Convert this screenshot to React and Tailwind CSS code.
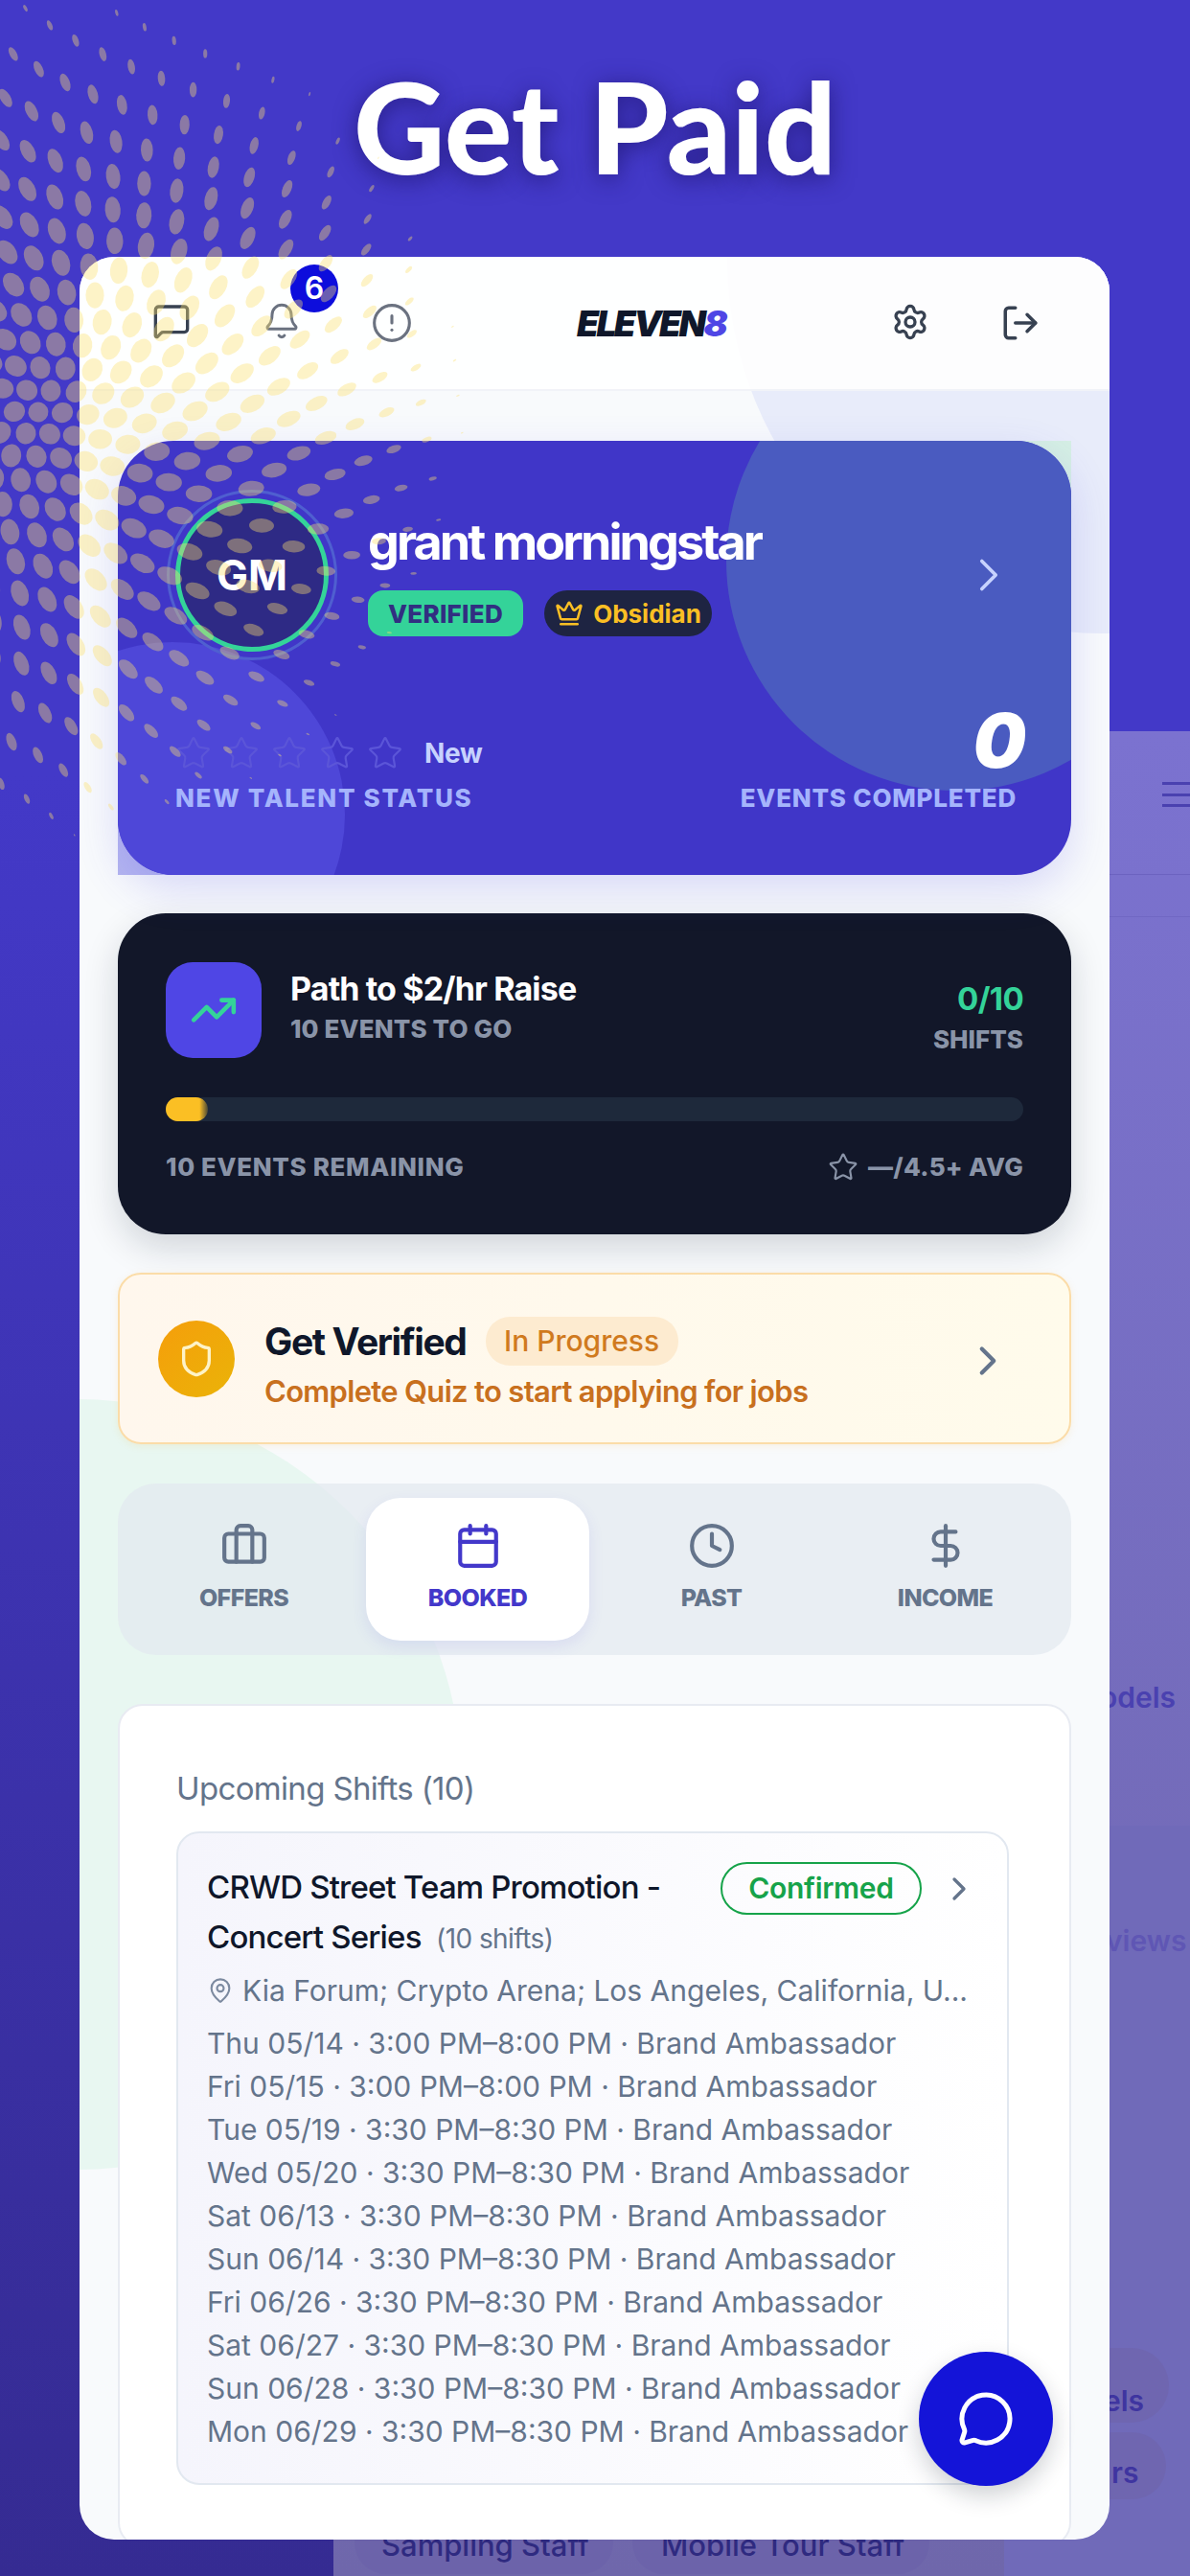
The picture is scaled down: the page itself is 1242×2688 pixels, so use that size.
import React from "react";
import {
  MessageSquare,
  Bell,
  CircleAlert,
  Settings,
  LogOut,
  ChevronRight,
  Star,
  Crown,
  TrendingUp,
  Shield,
  Briefcase,
  Calendar,
  Clock,
  DollarSign,
  MapPin,
  MessageCircle,
} from "lucide-react";

// halftone swirl that sits over the top left of the page
const buildDots = () => {
  const dots = [];
  const cx = 40;
  const cy = 430;
  const step = 24;
  for (let j = -22; j <= 22; j++) {
    for (let i = -22; i <= 22; i++) {
      const u = (i + (j % 2 ? 0.5 : 0)) * step;
      const v = j * step * 0.9;
      const rho = Math.hypot(u, v);
      const r = rho + (rho * rho) / 600;
      if (r > 445) continue;
      const a = Math.atan2(v, u) + 0.4 * (r / 420);
      const x = cx + r * Math.cos(a);
      const y = cy + r * Math.sin(a);
      if (x < -20 || y < -20) continue;
      const minor = 10.5 * Math.pow(1 - (r / 452) ** 2, 0.9);
      const major = minor * (1 + (r / 300) * 0.9);
      dots.push({
        x: +x.toFixed(1),
        y: +y.toFixed(1),
        rx: +major.toFixed(1),
        ry: +minor.toFixed(1),
        rot: +((a * 180) / Math.PI - 25).toFixed(1),
      });
    }
  }
  return dots;
};

const dots = buildDots();

const shifts = [
  "Thu 05/14 · 3:00 PM–8:00 PM · Brand Ambassador",
  "Fri 05/15 · 3:00 PM–8:00 PM · Brand Ambassador",
  "Tue 05/19 · 3:30 PM–8:30 PM · Brand Ambassador",
  "Wed 05/20 · 3:30 PM–8:30 PM · Brand Ambassador",
  "Sat 06/13 · 3:30 PM–8:30 PM · Brand Ambassador",
  "Sun 06/14 · 3:30 PM–8:30 PM · Brand Ambassador",
  "Fri 06/26 · 3:30 PM–8:30 PM · Brand Ambassador",
  "Sat 06/27 · 3:30 PM–8:30 PM · Brand Ambassador",
  "Sun 06/28 · 3:30 PM–8:30 PM · Brand Ambassador",
  "Mon 06/29 · 3:30 PM–8:30 PM · Brand Ambassador",
];

const tabs = [
  { label: "OFFERS", Icon: Briefcase },
  { label: "BOOKED", Icon: Calendar, active: true },
  { label: "PAST", Icon: Clock },
  { label: "INCOME", Icon: DollarSign },
];

const App = () => {
  return (
    <div className="relative w-[1242px] h-[2688px] overflow-hidden bg-gradient-to-b from-[#4339c8] from-30% to-[#352b92] font-['Inter',sans-serif]">
      {/* Screen peeking out behind the card */}
      <div className="absolute left-[348px] top-[763px] w-[894px] h-[1925px] bg-gradient-to-b from-[#7b72d0] to-[#6f67ab]">
        <div className="absolute right-0 top-[53px] w-[29px] h-[26px] flex flex-col justify-between">
          <div className="h-[3px] bg-[#4a41b0]" />
          <div className="h-[3px] bg-[#4a41b0]" />
          <div className="h-[3px] bg-[#4a41b0]" />
        </div>
        <div className="absolute left-0 right-0 top-[149px] h-[1px] bg-[#6c63c0]" />
        <div className="absolute left-0 right-0 top-[193px] h-[1px] bg-[#7067c4]" />
        <p className="absolute left-[800px] top-[986px] text-[30px] font-semibold text-[#4a41b0]">odels</p>
        <div className="absolute left-[700px] top-[1142px] w-[194px] h-[783px] bg-[#706ab9]" />
        <p className="absolute left-[806px] top-[1240px] text-[30px] font-semibold text-[#5f56b4]">views</p>
        <div className="absolute left-[700px] top-[1687px] w-[172px] h-[78px] rounded-[40px] bg-[#6f66b0]" />
        <p className="absolute left-[804px] top-[1720px] text-[30px] font-semibold text-[#3f35a0]">els</p>
        <div className="absolute left-[700px] top-[1775px] w-[169px] h-[70px] rounded-[36px] bg-[#6f66b0]" />
        <p className="absolute left-[812px] top-[1795px] text-[30px] font-semibold text-[#3f35a0]">rs</p>
        <div className="absolute left-[22px] top-[1857px] w-[270px] h-[66px] rounded-[33px] bg-[#6c63aa]" />
        <div className="absolute left-[312px] top-[1857px] w-[310px] h-[66px] rounded-[33px] bg-[#6c63aa]" />
        <p className="absolute left-[50px] top-[1870px] text-[31px] font-medium text-[#2f2a80] whitespace-nowrap">Sampling Staff</p>
        <p className="absolute left-[342px] top-[1870px] text-[31px] font-medium text-[#2f2a80] whitespace-nowrap">Mobile Tour Staff</p>
      </div>

      {/* Headline */}
      <div className="relative h-[268px] flex justify-center">
        <h1 className="mt-[56px] text-[132px] leading-[150px] font-black text-white font-['Lato',sans-serif] [text-shadow:0_4px_24px_rgba(30,20,110,0.75)]">
          Get Paid
        </h1>
      </div>

      {/* Phone card */}
      <div className="relative ml-[83px] w-[1075px] h-[2382px] rounded-[36px] overflow-hidden bg-[#f8fafc]">
        <div className="absolute left-[-405px] top-[1192px] w-[804px] h-[804px] rounded-full bg-[#e8f7f1]" />
        <div className="absolute left-[676px] top-[-389px] w-[782px] h-[782px] rounded-full bg-[#e8ecfa]" />

        {/* Top bar */}
        <div className="relative h-[140px] pl-[38px] pr-[35px] flex items-center justify-between bg-white/90 border-b-2 border-[#f1f3f8]">
          <div className="flex">
            <div className="w-[115px] flex justify-center">
              <MessageSquare size={40} strokeWidth={2} className="text-[#374151]" />
            </div>
            <div className="relative w-[115px] flex justify-center">
              <Bell size={40} strokeWidth={1.8} className="text-[#6b7280]" />
              <span className="absolute left-[67px] top-[-39px] w-[50px] h-[50px] rounded-full bg-[#0d0ddc] text-white text-[32px] font-semibold flex items-center justify-center">
                6
              </span>
            </div>
            <div className="w-[115px] flex justify-center">
              <CircleAlert size={44} strokeWidth={1.7} className="text-[#6b7280]" />
            </div>
          </div>
          <p className="text-[37px] leading-none font-black italic tracking-[-0.07em] text-[#0f172a]">
            ELEVEN<span className="text-[#4f46e5]">8</span>
          </p>
          <div className="flex">
            <div className="w-[115px] flex justify-center">
              <Settings size={40} strokeWidth={2} className="text-[#374151]" />
            </div>
            <div className="w-[115px] flex justify-center">
              <LogOut size={42} strokeWidth={2} className="text-[#374151]" />
            </div>
          </div>
        </div>

        <div className="relative px-[40px] pt-[52px]">
          {/* Profile hero */}
          <div className="relative h-[453px]">
            <div className="absolute right-0 top-0 w-[70px] h-[70px] bg-[#d5efe4]" />
            <div className="absolute left-0 bottom-0 w-[70px] h-[70px] bg-[#b5b6f0]" />
            <div className="relative h-full rounded-[58px] overflow-hidden bg-[#4036c8] shadow-[0_16px_44px_rgba(79,70,229,0.18)] flex flex-col justify-between pl-[60px] pr-[60px] pt-[60px] pb-[64px]">
              <div className="absolute left-[635px] top-[-115px] w-[480px] h-[480px] rounded-full bg-[#4a5bc0]" />
              <div className="absolute left-[-123px] top-[210px] w-[360px] h-[360px] rounded-full bg-[#4e47d8]" />

              <div className="relative flex items-center">
                <div className="w-[160px] h-[160px] rounded-full border-[5px] border-[#34d399] bg-[#2e2a85] outline-[3px] outline-offset-[6px] outline-[#4f5fd0] flex items-center justify-center text-white text-[44px] font-bold">
                  GM
                </div>
                <div className="ml-[41px] flex-1">
                  <p className="text-[52px] leading-[60px] font-bold tracking-[-0.056em] text-white">grant morningstar</p>
                  <div className="mt-[20px] flex items-center gap-[22px]">
                    <span className="h-[48px] w-[162px] rounded-[16px] bg-[#34d399] text-[#312e81] text-[26px] font-extrabold tracking-[0.01em] flex items-center justify-center">
                      VERIFIED
                    </span>
                    <span className="h-[48px] w-[175px] rounded-full bg-[#1e2442] text-[#fbbf24] text-[26px] font-bold flex items-center justify-center gap-[10px]">
                      <Crown size={30} strokeWidth={2} />
                      Obsidian
                    </span>
                  </div>
                </div>
                <ChevronRight size={58} strokeWidth={1.5} className="text-[#c7d2fe] mr-[-3px]" />
              </div>

              <div className="relative flex items-end justify-between">
                <div>
                  <div className="flex items-center">
                    <div className="flex gap-[12px]">
                      {[0, 1, 2, 3, 4].map((s) => (
                        <Star key={s} size={38} strokeWidth={1.4} className="text-[#5b55d8]" />
                      ))}
                    </div>
                    <span className="ml-[22px] text-[28px] font-bold tracking-[-0.01em] text-[#c7d2fe]">New</span>
                  </div>
                  <p className="mt-[10px] text-[26px] leading-[32px] font-extrabold tracking-[0.065em] text-[#a5b4fc]">NEW TALENT STATUS</p>
                </div>
                <div className="flex flex-col items-end">
                  <span className="mr-[-13px] text-[78px] leading-[80px] font-black italic text-white">0</span>
                  <p className="mr-[-3px] mt-[4px] text-[26px] leading-[32px] font-extrabold tracking-[0.03em] text-[#a5b4fc]">EVENTS COMPLETED</p>
                </div>
              </div>
            </div>
          </div>

          {/* Raise progress */}
          <div className="mt-[40px] h-[335px] rounded-[50px] bg-[#121729] shadow-[0_14px_36px_rgba(15,23,42,0.16)] px-[50px] pt-[51px]">
            <div className="flex">
              <div className="w-[100px] h-[100px] rounded-[28px] bg-[#4f46e5] flex items-center justify-center">
                <TrendingUp size={50} strokeWidth={2.2} className="text-[#34d399]" />
              </div>
              <div className="ml-[30px] flex-1 pt-[8px]">
                <p className="text-[34px] leading-[40px] font-bold tracking-[-0.025em] text-white">Path to $2/hr Raise</p>
                <p className="mt-[7px] text-[26px] leading-[30px] font-extrabold tracking-[0.005em] text-[#8a94a8]">10 EVENTS TO GO</p>
              </div>
              <div className="pt-[18px] text-right">
                <p className="text-[33px] leading-[40px] font-bold tracking-[-0.02em] text-[#34d399]">0/10</p>
                <p className="mt-[8px] text-[26px] leading-[30px] font-extrabold text-[#8a94a8]">SHIFTS</p>
              </div>
            </div>
            <div className="mt-[41px] h-[25px] rounded-full bg-[#1e293b] overflow-hidden">
              <div className="h-full w-[44px] rounded-r-full bg-gradient-to-r from-[#fbbf24] from-80% to-[#fbbf24]/20 to-100%" />
            </div>
            <div className="mt-[32px] flex items-center justify-between">
              <p className="text-[26px] leading-[30px] font-extrabold tracking-[0.025em] text-[#8a94a8]">10 EVENTS REMAINING</p>
              <div className="flex items-center gap-[10px] text-[26px] leading-[30px] font-extrabold tracking-[0.01em] text-[#8a94a8]">
                <Star size={32} strokeWidth={1.6} />
                <span>—/4.5+ AVG</span>
              </div>
            </div>
          </div>

          {/* Verification banner */}
          <div className="mt-[40px] h-[179px] rounded-[24px] border-2 border-[#fbdca8] bg-gradient-to-r from-[#fff7ed] to-[#fffbeb] shadow-[0_2px_8px_rgba(245,158,11,0.1)] pl-[40px] pr-[60px] flex items-center">
            <div className="w-[80px] h-[80px] rounded-full bg-gradient-to-br from-[#f59e0b] to-[#eab308] flex items-center justify-center">
              <Shield size={40} strokeWidth={2} className="text-[#fef3c7]" />
            </div>
            <div className="ml-[31px] flex-1 pt-[10px]">
              <div className="flex items-center">
                <span className="text-[39px] leading-[50px] font-bold tracking-[-0.035em] text-[#0f172a]">Get Verified</span>
                <span className="ml-[20px] h-[51px] w-[201px] rounded-[25px] bg-[#fdebd0] text-[#d07a1e] text-[30px] font-medium flex items-center justify-center">
                  In Progress
                </span>
              </div>
              <p className="mt-[8px] text-[31px] leading-[38px] font-semibold tracking-[-0.022em] text-[#c8701e]">
                Complete Quiz to start applying for jobs
              </p>
            </div>
            <ChevronRight size={50} strokeWidth={2} className="mt-[4px] text-[#64748b]" />
          </div>

          {/* Tabs */}
          <div className="mt-[41px] h-[179px] rounded-[40px] bg-[#e2e8f0]/70 p-[15px] flex gap-[11px]">
            {tabs.map(({ label, Icon, active }) => (
              <div
                key={label}
                className={
                  active
                    ? "flex-1 rounded-[36px] bg-white shadow-[0_6px_16px_rgba(79,70,229,0.1)] flex flex-col items-center pt-[25px] text-[#4338ca]"
                    : "flex-1 flex flex-col items-center pt-[25px] text-[#64748b]"
                }
              >
                <Icon size={50} strokeWidth={2} />
                <span className="mt-[14px] text-[25px] leading-[30px] font-extrabold tracking-[-0.025em]">{label}</span>
              </div>
            ))}
          </div>

          {/* Upcoming shifts */}
          <div className="mt-[51px] h-[880px] rounded-[26px] border-2 border-[#e8ebf2] bg-white px-[59px] pt-[63px]">
            <p className="text-[33px] leading-[46px] tracking-[-0.02em] text-[#64748b]">Upcoming Shifts (10)</p>
            <div className="mt-[22px] w-[869px] h-[682px] rounded-[24px] border-2 border-[#e2e8f0] bg-gradient-to-r from-[#f5f5fc] to-white pl-[30px] pr-[26px] pt-[30px]">
              <div className="flex items-start">
                <p className="w-[536px] text-[33px] leading-[52px] font-medium tracking-[-0.025em] text-[#0f172a]">
                  CRWD Street Team Promotion -<br />
                  Concert Series
                </p>
                <span className="h-[55px] w-[210px] rounded-full border-2 border-[#16a34a] text-[#16a34a] text-[30px] font-semibold tracking-[-0.01em] flex items-center justify-center">
                  Confirmed
                </span>
                <ChevronRight size={40} strokeWidth={2} className="ml-[19px] mt-[8px] text-[#64748b]" />
              </div>
              <p className="mt-[-44px] ml-[239px] text-[28px] leading-[40px] tracking-[-0.02em] text-[#64748b]">(10 shifts)</p>
              <div className="mt-[14px] flex items-center text-[#64748b]">
                <MapPin size={28} strokeWidth={1.8} className="shrink-0 text-[#7c8aa0]" />
                <p className="ml-[9px] text-[30px] leading-[40px] whitespace-nowrap">
                  Kia Forum; Crypto Arena; Los Angeles, California, U...
                </p>
              </div>
              <div className="mt-[13px]">
                {shifts.map((line) => (
                  <p key={line} className="text-[30px] leading-[45px] text-[#64748b] whitespace-nowrap">
                    {line}
                  </p>
                ))}
              </div>
            </div>
          </div>
        </div>

        {/* Chat bubble */}
        <div className="absolute left-[876px] top-[2186px] w-[140px] h-[140px] rounded-full bg-[#1414d8] shadow-[0_10px_24px_rgba(15,23,42,0.2)] flex items-center justify-center">
          <MessageCircle size={60} strokeWidth={2} className="text-white" />
        </div>
      </div>

      {/* Halftone overlay */}
      <svg className="absolute left-0 top-0 pointer-events-none" width="520" height="900" viewBox="0 0 520 900">
        {dots.map((d, i) => (
          <ellipse
            key={i}
            cx={d.x}
            cy={d.y}
            rx={d.rx}
            ry={d.ry}
            fill="#fce06f"
            fillOpacity="0.39"
            transform={`rotate(${d.rot} ${d.x} ${d.y})`}
          />
        ))}
      </svg>
    </div>
  );
};

export default App;
